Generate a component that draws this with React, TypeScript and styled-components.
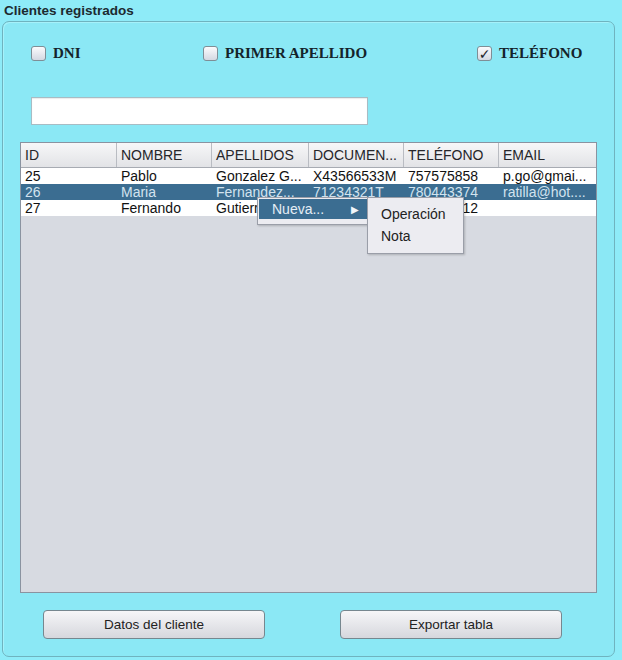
import React from "react";
import styled, { createGlobalStyle } from "styled-components";

const Global = createGlobalStyle`
  html, body { margin: 0; padding: 0; background: #8eebf8; }
  * { box-sizing: border-box; }
`;

const Frame = styled.div`
  width: 622px;
  height: 660px;
  background: #8eebf8;
  padding: 0 7px 3px 2px;
  display: flex;
  flex-direction: column;
  font-family: "Liberation Sans", Arial, sans-serif;
`;

const Title = styled.div`
  height: 21px;
  padding: 3px 0 0 2px;
  font-size: 13.5px;
  font-weight: bold;
  color: #1c2a30;
  line-height: 16px;
`;

const Panel = styled.div`
  position: relative;
  height: 636px;
  border: 1px solid #6fb3bf;
  border-radius: 7px;
  background: #8be8f5;
  box-shadow: inset 1px 1px 0 #a6f1fa;
  display: flex;
  flex-direction: column;
`;

const CheckRow = styled.div`
  margin-top: 23px;
  height: 17px;
  padding-left: 28px;
  display: grid;
  grid-template-columns: 172px 274px auto;
  align-items: center;
`;

const CheckItem = styled.label`
  display: flex;
  align-items: center;
  gap: 7px;
  font-family: "Liberation Serif", "Times New Roman", serif;
  font-weight: bold;
  font-size: 15px;
  color: #14232a;
`;

const Box = styled.span<{ $checked?: boolean }>`
  width: 15px;
  height: 15px;
  border: 1px solid #7f8e96;
  border-radius: 3px;
  background: linear-gradient(#fbfbfd, #d4d8e2);
  display: flex;
  align-items: center;
  justify-content: center;
  font-family: "DejaVu Sans", sans-serif;
  font-size: 14px;
  line-height: 1;
  color: #1a222c;
  font-weight: bold;
`;

const SearchInput = styled.div`
  margin: 35px 0 0 28px;
  width: 337px;
  height: 28px;
  background: #ffffff;
  border: 1px solid #a8bcc4;
  box-shadow: inset 0 1px 1px rgba(0, 0, 0, 0.08);
`;

const TableWrap = styled.div`
  position: relative;
  margin: 17px 0 0 17px;
  width: 577px;
  height: 451px;
  border: 1px solid #8a93a0;
  background: #d7dae1;
`;

const cols = "96px 95px 97px 95px 95px 1fr";

const HeaderRow = styled.div`
  display: grid;
  grid-template-columns: ${cols};
  height: 25px;
  background: linear-gradient(#f7f7f8, #e2e3e6);
  border-bottom: 1px solid #a7abb2;
`;

const HeaderCell = styled.div`
  display: flex;
  align-items: center;
  padding-left: 4px;
  font-size: 14px;
  color: #26262a;
  border-right: 1px solid #b9bcc2;
  white-space: nowrap;
  overflow: hidden;
  &:last-child { border-right: none; }
`;

const Row = styled.div<{ $selected?: boolean }>`
  display: grid;
  grid-template-columns: ${cols};
  height: 16px;
  background: ${(p) => (p.$selected ? "#3b6d91" : "#ffffff")};
  color: ${(p) => (p.$selected ? "#d2e3ef" : "#111111")};
`;

const Cell = styled.div`
  padding-left: 4px;
  font-size: 14px;
  line-height: 17px;
  white-space: nowrap;
  overflow: hidden;
`;

const Menu = styled.div`
  position: absolute;
  background: #ececf1;
  border: 1px solid #9a9ea8;
  box-shadow: 1px 1px 2px rgba(0, 0, 0, 0.2);
  font-size: 14px;
`;

const MainMenu = styled(Menu)`
  left: 236px;
  top: 54px;
  width: 111px;
  height: 28px;
  padding: 1px 0 0 1px;
`;

const SubMenu = styled(Menu)`
  left: 346px;
  top: 54px;
  width: 97px;
  height: 57px;
  padding: 5px 0 0 0;
`;

const MenuItem = styled.div<{ $active?: boolean }>`
  display: flex;
  align-items: center;
  justify-content: space-between;
  height: ${(p) => (p.$active ? "20px" : "22px")};
  padding: 0 8px 0 13px;
  background: ${(p) => (p.$active ? "#3b6d91" : "transparent")};
  color: ${(p) => (p.$active ? "#e6eef5" : "#222")};
  width: ${(p) => (p.$active ? "108px" : "auto")};
`;

const Arrow = styled.span`
  font-size: 10px;
  color: #f2f6fa;
`;

const ButtonRow = styled.div`
  margin: 17px 0 0 40px;
  display: flex;
  gap: 75px;
`;

const Button = styled.div`
  width: 222px;
  height: 29px;
  border: 1px solid #76878f;
  border-radius: 4px;
  background: linear-gradient(#f6f6f8, #d6d7dd);
  display: flex;
  align-items: center;
  justify-content: center;
  font-size: 13.5px;
  color: #222;
`;

const headers = ["ID", "NOMBRE", "APELLIDOS", "DOCUMEN...", "TELÉFONO", "EMAIL"];
const rows = [
  ["25", "Pablo", "Gonzalez G...", "X43566533M", "757575858", "p.go@gmai..."],
  ["26", "Maria", "Fernandez...", "71234321T", "780443374", "ratilla@hot...."],
  ["27", "Fernando", "Gutierrez...", "45678901L", "654321812", ""],
];

export default function App() {
  return (
    <>
      <Global />
      <Frame>
        <Title>Clientes registrados</Title>
        <Panel>
          <CheckRow>
            <CheckItem>
              <Box />
              DNI
            </CheckItem>
            <CheckItem>
              <Box />
              PRIMER APELLIDO
            </CheckItem>
            <CheckItem>
              <Box $checked>✓</Box>
              TELÉFONO
            </CheckItem>
          </CheckRow>
          <SearchInput />
          <TableWrap>
            <HeaderRow>
              {headers.map((h) => (
                <HeaderCell key={h}>{h}</HeaderCell>
              ))}
            </HeaderRow>
            {rows.map((r, i) => (
              <Row key={r[0]} $selected={i === 1}>
                {r.map((c, j) => (
                  <Cell key={j}>{c}</Cell>
                ))}
              </Row>
            ))}
            <MainMenu>
              <MenuItem $active>
                Nueva...
                <Arrow>▶</Arrow>
              </MenuItem>
            </MainMenu>
            <SubMenu>
              <MenuItem>Operación</MenuItem>
              <MenuItem>Nota</MenuItem>
            </SubMenu>
          </TableWrap>
          <ButtonRow>
            <Button>Datos del cliente</Button>
            <Button>Exportar tabla</Button>
          </ButtonRow>
        </Panel>
      </Frame>
    </>
  );
}
